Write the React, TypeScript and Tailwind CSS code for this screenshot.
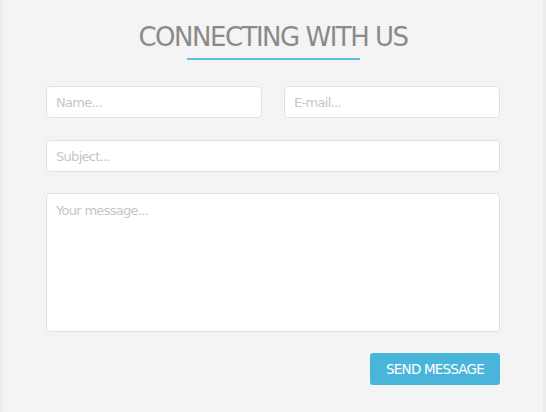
const fieldClass =
    "w-full h-8 rounded-[4px] border border-[#e2e2e2] bg-white px-[9px] text-[13px] tracking-[-0.7px] text-[#555] placeholder:text-[#c6c6c6] outline-none";

const App = () => {
    return (
        <div className="min-h-screen bg-[#ececec] px-[3px] font-['DejaVu_Sans',sans-serif]">
            <div className="min-h-screen bg-[#f4f4f4] px-[43px] pt-[21px]">
                {/* Heading */}
                <div className="flex flex-col items-center">
                    <h2 className="text-[26px] leading-[32px] text-[#8a8a8a] tracking-[-1.5px]">
                        CONNECTING WITH US
                    </h2>
                    <div className="mt-[5px] w-[173px] h-[2px] bg-[#5bc0de]" />
                </div>

                {/* Form */}
                <form className="mt-[26px] flex flex-col gap-[21px]">
                    <div className="grid grid-cols-2 gap-[22px] mb-[1px]">
                        <input className={fieldClass} placeholder="Name..." />
                        <input className={fieldClass} placeholder="E-mail..." />
                    </div>
                    <input className={fieldClass} placeholder="Subject..." />
                    <textarea
                        className="w-full h-[139px] resize-none rounded-[4px] border border-[#e2e2e2] bg-white px-[9px] py-[7px] text-[13px] tracking-[-0.7px] text-[#555] placeholder:text-[#c6c6c6] outline-none"
                        placeholder="Your message..."
                    />
                    <div className="flex justify-end">
                        <button
                            type="button"
                            className="w-[130px] h-8 rounded-[3px] bg-[#4ab5da] text-[13.5px] text-white tracking-[-0.8px]"
                        >
                            SEND MESSAGE
                        </button>
                    </div>
                </form>
            </div>
        </div>
    );
};

export default App;
